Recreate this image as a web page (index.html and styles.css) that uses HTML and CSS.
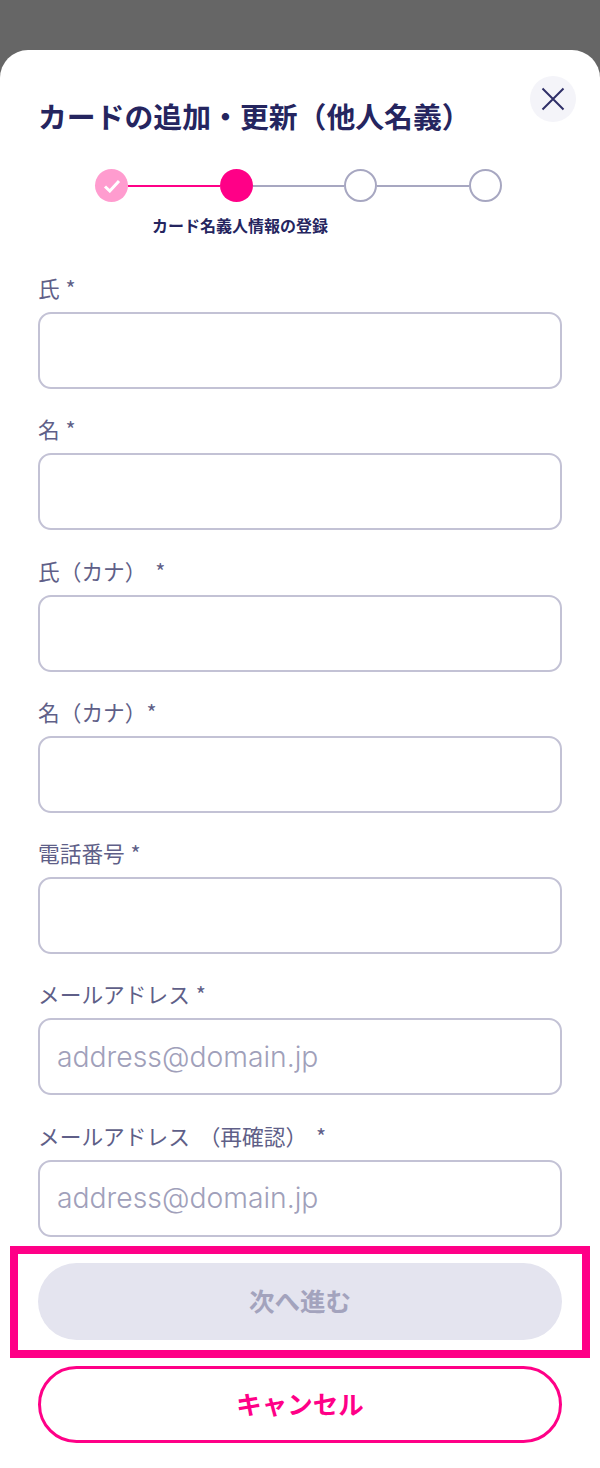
FILE: index.html
```html
<!DOCTYPE html>
<html lang="ja">
<head>
    <meta charset="UTF-8">
    <meta name="viewport" content="width=device-width, initial-scale=1.0">
    <title>カードの追加・更新</title>
    <link rel="stylesheet" href="styles.css">
</head>
<body>
    <div class="sheet">
        <button class="close-button" type="button" aria-label="閉じる">
            <svg width="26" height="26" viewBox="0 0 26 26"><path d="M2.5 2.5 L23.5 23.5 M23.5 2.5 L2.5 23.5" /></svg>
        </button>
        <h1 class="title">カードの追加・更新（他人名義）</h1>

        <!-- Steps -->
        <div class="stepper">
            <span class="step done">
                <svg width="18" height="14" viewBox="0 0 18 14"><path d="M2 7.5 L6.8 12 L16 2" /></svg>
            </span>
            <span class="step-line active"></span>
            <span class="step current"></span>
            <span class="step-line"></span>
            <span class="step"></span>
            <span class="step-line"></span>
            <span class="step"></span>
        </div>
        <p class="step-label">カード名義人情報の登録</p>

        <!-- Form -->
        <form class="form">
            <div class="field">
                <label for="lastName">氏 *</label>
                <input type="text" id="lastName">
            </div>
            <div class="field">
                <label for="firstName">名 *</label>
                <input type="text" id="firstName">
            </div>
            <div class="field">
                <label class="wide" for="lastKana">氏（カナ） *</label>
                <input type="text" id="lastKana">
            </div>
            <div class="field">
                <label for="firstKana">名（カナ）*</label>
                <input type="text" id="firstKana">
            </div>
            <div class="field">
                <label for="phone">電話番号 *</label>
                <input type="text" id="phone">
            </div>
            <div class="field">
                <label for="email">メールアドレス *</label>
                <input type="text" id="email" placeholder="address@domain.jp">
            </div>
            <div class="field">
                <label class="wide" for="emailConfirm">メールアドレス （再確認） *</label>
                <input type="text" id="emailConfirm" placeholder="address@domain.jp">
            </div>
        </form>

        <div class="actions">
            <div class="next-wrap">
                <button class="next-button" type="button">次へ進む</button>
                <div class="highlight"></div>
            </div>
            <button class="cancel-button" type="button">キャンセル</button>
        </div>
    </div>
</body>
</html>
```

FILE: styles.css
```css
/* Root Variables */
:root {
    --navy: #25255f;
    --label: #5f5f88;
    --pink: #ff0087;
    --line: #a7a7c1;
    --border: #c3c2d5;
    --font: 'Noto Sans CJK JP', 'Noto Sans', sans-serif;
}

/* Global Styles */
body {
    margin: 0;
    height: 1468px;
    overflow: hidden;
    background: #666;
    font-family: var(--font);
    color: var(--navy);
}

.sheet {
    position: relative;
    margin-top: 50px;
    height: 1418px;
    padding: 0 38px;
    box-sizing: border-box;
    background: #fff;
    border-radius: 28px 28px 0 0;
}

.close-button {
    position: absolute;
    top: 26px;
    right: 24px;
    width: 46px;
    height: 46px;
    padding: 0;
    border: none;
    border-radius: 50%;
    background: #f4f4f9;
    display: flex;
    align-items: center;
    justify-content: center;
}

.close-button path {
    fill: none;
    stroke: #2f2f68;
    stroke-width: 2;
}

.title {
    margin: 0;
    padding-top: 45px;
    font-size: 28.85px;
    line-height: 42px;
    font-weight: 700;
    white-space: nowrap;
}

/* Stepper */
.stepper {
    display: flex;
    align-items: center;
    width: 407px;
    margin: 32px 0 0 57px;
}

.step {
    flex: none;
    width: 33px;
    height: 33px;
    box-sizing: border-box;
    border: 2px solid var(--line);
    border-radius: 50%;
    background: #fff;
    display: flex;
    align-items: center;
    justify-content: center;
}

.step.done {
    border: none;
    background: #ff9ccf;
}

.step.done path {
    fill: none;
    stroke: #fff;
    stroke-width: 3;
}

.step.current {
    border: none;
    background: var(--pink);
}

.step-line {
    flex: 1;
    height: 2px;
    background: var(--line);
}

.step-line.active {
    background: var(--pink);
}

.step-label {
    margin: 11px 0 0 114px;
    font-size: 16px;
    line-height: 24px;
    font-weight: 700;
}

/* Form */
.form {
    display: flex;
    flex-direction: column;
    gap: 27.3px;
    margin-top: 38px;
}

.field {
    display: flex;
    flex-direction: column;
    gap: 11px;
}

.field label {
    height: 26px;
    font-size: 21.7px;
    line-height: 26px;
    word-spacing: 1px;
    color: var(--label);
    white-space: pre;
}

.field label.wide {
    word-spacing: 4px;
}

.field input {
    height: 77px;
    box-sizing: border-box;
    padding: 0 17px;
    border: 2px solid var(--border);
    border-radius: 13px;
    background: #fff;
    font-family: 'Inter', sans-serif;
    font-size: 28.3px;
    font-weight: 300;
}

.field input::placeholder {
    color: #a0a0ba;
    opacity: 1;
}

/* Buttons */
.actions {
    display: flex;
    flex-direction: column;
    gap: 26px;
    margin-top: 26px;
}

.next-wrap {
    position: relative;
}

.next-button,
.cancel-button {
    display: block;
    width: 100%;
    height: 77px;
    padding: 0 0 4px;
    border-radius: 39px;
    font-family: var(--font);
    font-size: 25.5px;
    font-weight: 700;
}

.next-button {
    border: none;
    background: #e4e4ef;
    color: #a3a3bd;
}

.cancel-button {
    border: 3px solid var(--pink);
    background: #fff;
    color: var(--pink);
}

/* Annotation drawn over the screenshot */
.highlight {
    position: absolute;
    top: -17px;
    bottom: -18px;
    left: -28px;
    right: -28px;
    border: 8px solid var(--pink);
}
```
